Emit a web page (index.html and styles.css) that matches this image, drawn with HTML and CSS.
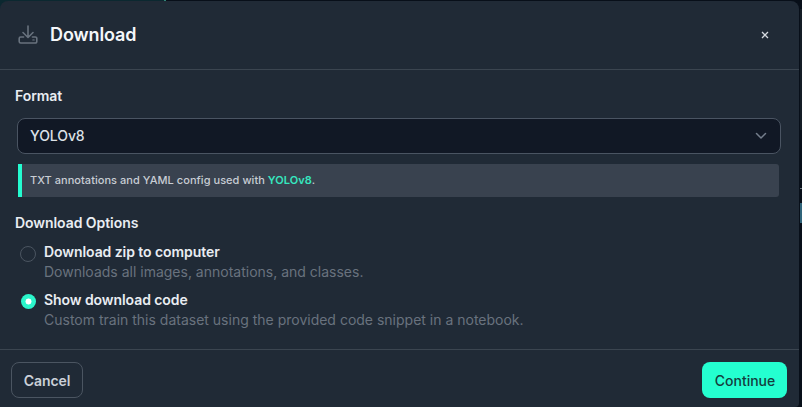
FILE: index.html
```html
<!DOCTYPE html>
<html lang="en">
<head>
<meta charset="utf-8">
<title>Download</title>
<link rel="stylesheet" href="styles.css">
</head>
<body>
<div class="strip"></div>
<div class="side"><i class="side-light"></i><i class="side-rule"></i><i class="side-tab"></i></div>
<section class="modal">
  <header class="header">
    <svg class="download-icon" width="20" height="20" viewBox="0 0 20 20" fill="none" stroke="currentColor" stroke-width="1.6" stroke-linecap="round" stroke-linejoin="round">
      <path d="M10 1v11.2M5 7.5l5 5 5-5M5.600 12H2.700A1.500 1.500 0 0 0 1.200 13.500v3A1.500 1.500 0 0 0 2.700 18h14.600a1.500 1.500 0 0 0 1.500-1.500v-3a1.500 1.500 0 0 0-1.500-1.500h-2.900"/>
      <circle cx="15.500" cy="15" r=".3"/>
    </svg>
    <h1 class="title">Download</h1>
    <button class="close" aria-label="Close"><svg width="8" height="8" viewBox="0 0 8 8" stroke="currentColor" stroke-width="1.3"><path d="M1 1l6 6M7 1L1 7"/></svg></button>
  </header>
  <main class="body">
    <h2 class="label">Format</h2>
    <div class="select"><span>YOLOv8</span><svg width="12" height="8" viewBox="0 0 12 8" fill="none" stroke="currentColor" stroke-width="1.5" stroke-linecap="round" stroke-linejoin="round"><path d="M1.500 1.500L6 6l4.500-4.500"/></svg></div>
    <p class="note">TXT annotations and YAML config used with <a>YOLOv8</a>.</p>
    <h2 class="label options-label">Download Options</h2>
    <div class="option">
      <span class="radio"></span>
      <div><div class="name">Download zip to computer</div><div class="hint">Downloads all images, annotations, and classes.</div></div>
    </div>
    <div class="option">
      <span class="radio checked"></span>
      <div><div class="name">Show download code</div><div class="hint">Custom train this dataset using the provided code snippet in a notebook.</div></div>
    </div>
  </main>
  <footer class="footer">
    <button class="btn cancel">Cancel</button>
    <button class="btn continue">Continue</button>
  </footer>
</section>
</body>
</html>
```
FILE: styles.css
```css
* { box-sizing: border-box; }
body { margin: 0; width: 802px; height: 407px; overflow: hidden; padding-top: 1px; background: #080f19; font-family: Inter, sans-serif; position: relative; }
.strip { position: absolute; top: 0; left: 0; width: 166px; height: 12px; background: #0b2830; border-right: 2px solid #318477; }
.side { position: absolute; right: 0; top: 0; width: 3px; height: 407px; }
.side-light, .side-rule, .side-tab { position: absolute; right: 0; width: 2px; }
.side-light { top: 9px; height: 121px; background: #141c25; }
.side-rule { top: 188px; height: 1px; background: #69737d; }
.side-tab { top: 203px; height: 20px; background: #30647a; }
.modal { position: relative; width: 799px; height: 406px; background: #202a36; border-radius: 8px 8px 4px 0; display: flex; flex-direction: column; }
.header { height: 69px; flex: none; border-bottom: 1px solid #3b4550; display: flex; align-items: center; padding: 0 29px 0 18px; }
.download-icon { color: #68727e; }
.title { margin: 0 auto 0 12px; font-size: 18px; line-height: 28px; font-weight: 600; letter-spacing: -.1px; color: #f5f7fa; }
button { font-family: inherit; }
.close { border: 0; background: none; color: #d4d9df; padding: 0; width: 10px; height: 10px; display: flex; align-items: center; justify-content: center; }
.body { flex: 1; padding: 16px 18px 0 15px; }
.label { margin: 0; font-size: 14px; line-height: 20px; font-weight: 600; letter-spacing: -.06px; color: #e9edf2; }
.select { margin: 12px 0 0 2px; width: 764px; height: 36px; border: 1px solid #4a5462; border-radius: 8px; background: #111825; display: flex; align-items: center; justify-content: space-between; padding: 0 13px 0 12px; font-size: 14px; font-weight: 500; color: #dde1e7; }
.select span { padding-bottom: 2px; letter-spacing: -.08px; }
.select svg { color: #747e8c; }
.note { margin: 10px 0 0 3px; width: 761px; height: 33px; border-left: 4px solid #24fbd0; border-radius: 0 3px 3px 0; background: #39424f; padding-left: 8px; font-size: 11px; line-height: 33px; font-weight: 500; letter-spacing: .042px; color: #c8cdd4; }
.note a { color: #36e7bf; font-weight: 600; }
.options-label { margin-top: 16px; }
.option { display: flex; gap: 8px; margin: 9px 0 0 5px; height: 39px; }
.option + .option { margin-top: 9px; }
.radio { width: 16px; height: 16px; margin-top: 4px; border: 1px solid #4b5561; border-radius: 50%; flex: none; }
.radio.checked { border: 0; background: radial-gradient(circle, #fff 2.7px, #2bf5cb 3.3px); width: 15px; height: 15px; margin: 4px 0 0 1px; }
.name { font-size: 14px; line-height: 20px; font-weight: 600; letter-spacing: -.07px; color: #e9edf2; }
.hint { font-size: 14px; line-height: 20px; color: #69727e; }
.footer { height: 58px; flex: none; border-top: 1px solid #3b4550; display: flex; justify-content: space-between; padding: 12px 12px 0 11px; }
.btn { height: 36px; border-radius: 8px; padding: 0; font-size: 14px; }
.cancel { width: 72px; border: 1px solid #4b5561; background: transparent; color: #cbd0d8; font-weight: 600; letter-spacing: -.06px; }
.continue { width: 85px; border: 0; background: #24ffd0; color: #153c3d; font-weight: 500; padding-left: 1px; }
```
